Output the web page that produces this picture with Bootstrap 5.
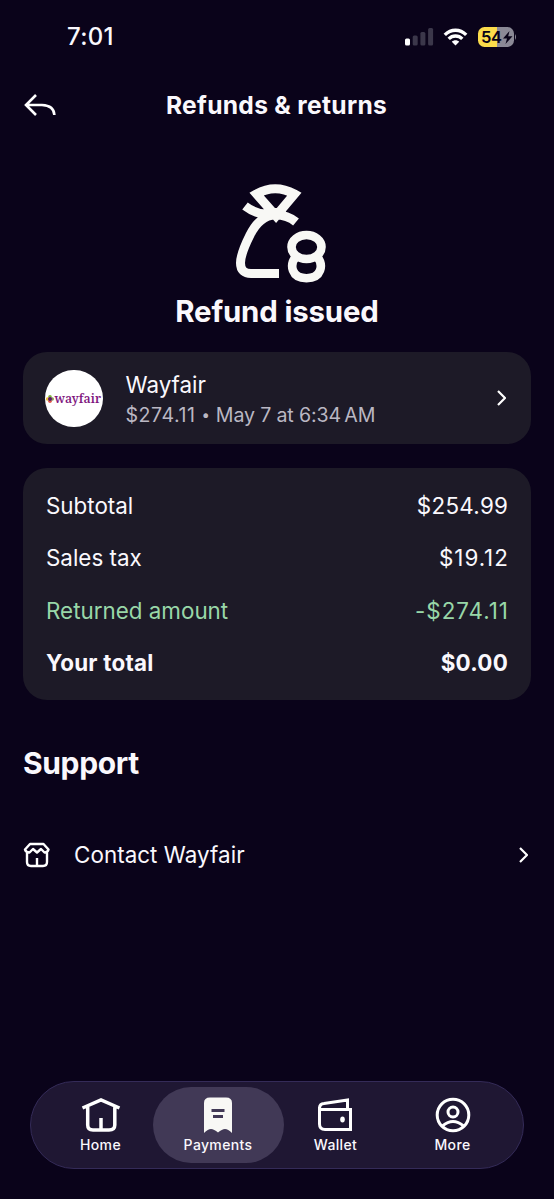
<!DOCTYPE html>
<html lang="en">
<head>
<meta charset="utf-8">
<meta name="viewport" content="width=device-width, initial-scale=1">
<title>Refunds &amp; returns</title>
<link href="https://cdn.jsdelivr.net/npm/bootstrap@5.3.0/dist/css/bootstrap.min.css" rel="stylesheet">
<style>
body{background:#0a031a;color:#faf8fd;font-family:Inter,"Liberation Sans",sans-serif;font-size:22.4px;line-height:28px;-webkit-font-smoothing:antialiased}
.screen{height:1199px;overflow:hidden}
svg{display:block;flex:none}
.status-bar{height:74px;padding:0 37px 0 67px}
.clock{font-size:24px;font-weight:500;letter-spacing:.3px}
.battery{width:36px;height:20px;border-radius:6.5px;background:linear-gradient(90deg,#fbdc4b 53%,#8b8996 53%);color:#080218;font-size:16.5px;font-weight:600;line-height:20px;letter-spacing:-.4px;padding-left:3px;margin-left:10px}
.wifi{margin-left:9px}
.top-bar{height:62px;padding:0 57px 0 24px}
.page-title{font-size:24.6px;font-weight:700;letter-spacing:.3px}
.hero{padding-top:34px}
.hero-title{font-size:29.4px;font-weight:700;line-height:34px;letter-spacing:-.15px}
.panel{background:#1d1a27;border-radius:24px;margin:0 23px}
.merchant{height:92px;padding:0 25px 0 22px;margin-top:23px}
.avatar{width:57.5px;height:57.5px;background:#fff;color:#7f187f;font-family:"Noto Serif","DejaVu Serif","Liberation Serif",serif;font-size:12.2px;font-weight:600;margin-top:1px}
.merchant-text{padding:5px 0 0 23px}
.muted-line{color:#bab7c3;font-size:19.6px;line-height:31px}
.paid{letter-spacing:.5px}
.when{letter-spacing:-.15px}
.bullet{font-size:15px;vertical-align:1.5px;margin:0 .5px}
.totals{height:232.5px;padding:12px 23px;margin-top:23.5px}
.totals>div{height:52.5px}
.price{letter-spacing:.3px;margin-right:-.3px}
.wide-digits{letter-spacing:.95px;margin-right:-.8px}
.grand{font-weight:700;letter-spacing:.25px}
.returned{color:#98d7a8}
.support-title{font-size:30px;font-weight:700;line-height:36px;margin:44.5px 23px 0;letter-spacing:-.35px}
.contact{margin:0 26px 0 23px;padding-top:60px}
.contact-label{padding-left:23px;letter-spacing:.05px}
.tabs{margin:0 30px 30px;height:88px;border:1.5px solid #342b58;border-radius:44px;background:#1f1733;padding:5px 5px 5px 17.5px}
.tab-item{width:104px;font-size:14px;line-height:18px;font-weight:500;padding-top:9px;letter-spacing:.35px}
.tab-item svg{margin-bottom:2px}
.tab-item.current{width:131px;height:76px;border-radius:38px;background:#413956}
.tab-item.last{width:130px}
</style>
</head>
<body>
<main class="screen d-flex flex-column">
<div class="status-bar d-flex justify-content-between align-items-center">
<span class="clock">7:01</span>
<div class="d-flex align-items-center">
<svg width="29" height="18" viewBox="0 0 29 18"><rect x="0" y="10.5" width="5" height="7" rx="1.5" fill="#fff"/><g fill="#3b374a"><rect x="7.7" y="7.5" width="5" height="10" rx="1.5"/><rect x="15.4" y="4" width="5" height="13.5" rx="1.5"/><rect x="23.1" y="0" width="5" height="17.5" rx="1.5"/></g></svg>
<svg class="wifi" width="25" height="18" viewBox="0 0 25 18" fill="none" stroke="#fff" stroke-width="3.4"><path d="M1.8 6.9C8 .7 17 .7 23.2 6.9M5.7 10.9C9.6 7 15.4 7 19.3 10.9"/><path d="M12.5 17.5L8.8 13.8C10.8 11.8 14.2 11.8 16.2 13.8Z" fill="#fff" stroke="none"/></svg>
<div class="battery d-flex align-items-center"><span>54</span><svg width="11" height="13" viewBox="0 0 11 13"><path d="M7.5 0L1 7.5H5L3.5 13L10.5 5.300H6.200Z" fill="#080218"/></svg></div>
<svg width="3" height="6" viewBox="0 0 3 6"><path d="M1 0Q3 3 1 6Z" fill="#8b8996"/></svg>
</div>
</div>
<header class="top-bar d-flex align-items-center">
<svg width="32" height="24" viewBox="0 0 32 24" fill="none" stroke="#fff" stroke-width="2.6"><path d="M12 2L2 12L12 22M2 12H18Q30 12.5 30.4 22"/></svg>
<span class="page-title flex-fill text-center">Refunds &amp; returns</span>
</header>
<section class="hero d-flex flex-column align-items-center">
<svg width="120" height="125" viewBox="-3 0 120 125" fill="none" stroke="#f8f8f5" stroke-width="9"><path d="M36.500 24Q55 13.500 74.500 24L56 46ZM25 36Q38 46 52 43.500M76 52C70 47 63 45 55.500 45C43 45 35.500 54 30 65C24 77 20.500 86 20.500 93C20.500 100.500 24.500 103.500 31 103.500H59"/><path d="M37 49L48 38H63L68 44L54 49Z" fill="#f8f8f5" stroke="none"/><g stroke-width="8.600"><ellipse cx="86.500" cy="77" rx="15" ry="12"/><path d="M76 86.500C69 95 71.500 108.200 86.500 108.200S104 95 97 86.500"/></g></svg>
<h2 class="hero-title m-0">Refund issued</h2>
</section>
<section class="panel merchant d-flex align-items-center">
<div class="avatar rounded-circle d-flex align-items-center justify-content-center"><svg width="8" height="8" viewBox="0 0 8 8"><circle cx="4" cy="1.8" r="1.8" fill="#7fb53a"/><circle cx="1.7" cy="4" r="1.8" fill="#f0c437"/><circle cx="4" cy="6.2" r="1.8" fill="#e05a4b"/><circle cx="6.2" cy="4" r="1.8" fill="#8a9a56"/><circle cx="4" cy="4" r="2" fill="#5d1a68"/></svg><span class="brand">wayfair</span></div>
<div class="merchant-text flex-fill"><div class="name">Wayfair</div><div class="muted-line"><span class="paid">$274.11</span> <span class="bullet">•</span> <span class="when">May 7 at 6:34&#8201;AM</span></div></div>
<svg width="9" height="16" viewBox="0 0 9 16" fill="none" stroke="#fff" stroke-width="2.2"><path d="M1 1L8 8L1 15"/></svg>
</section>
<section class="panel totals">
<div class="d-flex justify-content-between align-items-center"><span>Subtotal</span><span class="price">$254.99</span></div>
<div class="d-flex justify-content-between align-items-center"><span>Sales tax</span><span class="wide-digits">$19.12</span></div>
<div class="returned d-flex justify-content-between align-items-center"><span>Returned amount</span><span class="wide-digits">-$274.11</span></div>
<div class="grand d-flex justify-content-between align-items-center"><span>Your total</span><span>$0.00</span></div>
</section>
<h2 class="support-title">Support</h2>
<div class="contact d-flex align-items-center">
<svg width="28" height="28" viewBox="0 0 28 28" fill="none" stroke="#fff" stroke-width="2.4" stroke-linejoin="round"><path d="M7 3H20.500L25.500 8.500Q24.500 11.500 21.500 11.500L18 8L14 11.500L10 8L6.500 11.500Q3 11.500 2 8.500ZM4 11V21Q4 25 8 25H20Q24 25 24 21V11M14 25V17"/></svg>
<span class="contact-label flex-fill">Contact Wayfair</span>
<svg width="9" height="16" viewBox="0 0 9 16" fill="none" stroke="#fff" stroke-width="2.2"><path d="M1 1L8 8L1 15"/></svg>
</div>
<nav class="tabs d-flex mt-auto">
<div class="tab-item d-flex flex-column align-items-center"><svg width="40" height="38" viewBox="0 0 40 38" fill="none" stroke="#fff" stroke-width="3.5"><path d="M1.5 12L20 4L38.5 12M6.7 10V29Q6.7 34 12 34H28Q33.8 34 33.8 29V10M20 34V22"/></svg>Home</div>
<div class="tab-item current d-flex flex-column align-items-center"><svg width="30" height="38" viewBox="0 0 30 38"><path d="M1 37V7Q1 1.5 7 1.5H23Q29 1.5 29 7V37Q25 33 22 33Q19 33 15 36.5Q11 33 8 33Q5 33 1 37Z" fill="#f8f8f5"/><path d="M8.5 14.5H21.5M10 20.5H20" stroke="#413956" stroke-width="3"/></svg>Payments</div>
<div class="tab-item d-flex flex-column align-items-center"><svg width="36" height="38" viewBox="0 0 36 38" fill="none" stroke="#fff" stroke-width="3"><path d="M1.5 13V28Q1.5 33.5 7 33.5H32.5V13.5H1.5Q1 8 6 7.5L29.5 4V13"/><ellipse cx="24.5" cy="23.5" rx="2.3" ry="3" fill="#fff" stroke="none"/></svg>Wallet</div>
<div class="tab-item last d-flex flex-column align-items-center"><svg width="36" height="38" viewBox="0 0 36 38" fill="none" stroke="#fff" stroke-width="3"><circle cx="18" cy="19" r="15.8"/><circle cx="18" cy="16" r="5"/><path d="M7.5 30Q18 21 28.5 30"/></svg>More</div>
</nav>
</main>
<script src="https://cdn.jsdelivr.net/npm/bootstrap@5.3.0/dist/js/bootstrap.bundle.min.js"></script>
</body>
</html>
